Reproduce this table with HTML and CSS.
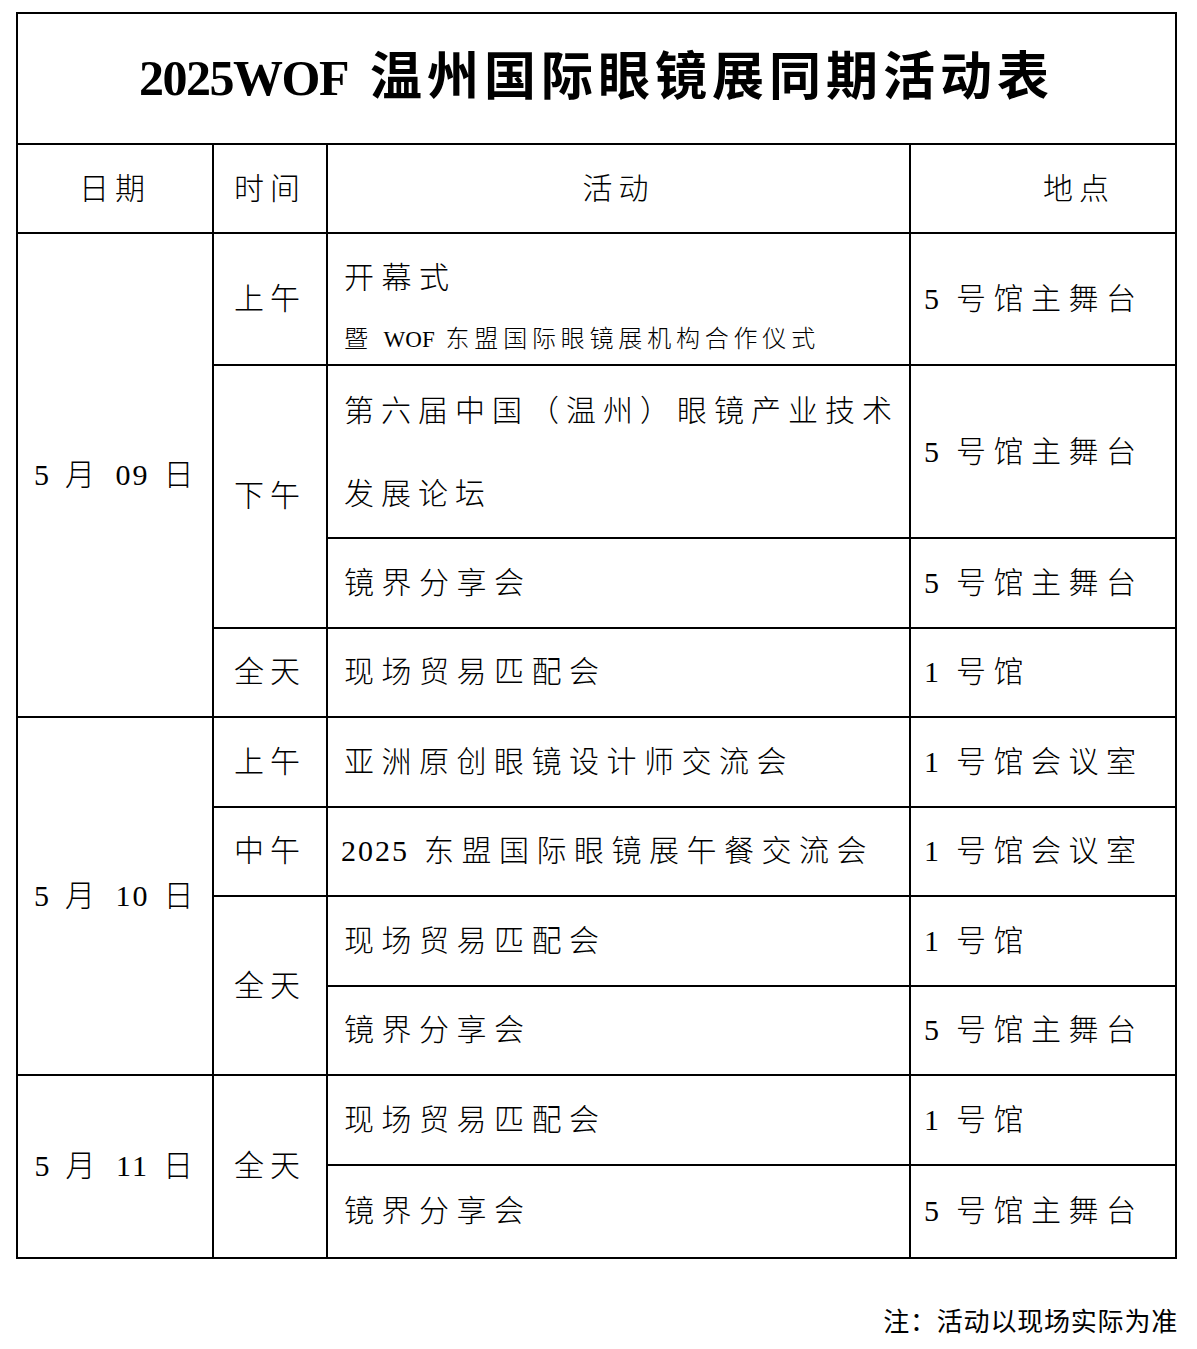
FILE: index.html
```html
<!DOCTYPE html>
<html lang="zh-CN">
<head>
<meta charset="utf-8">
<title>2025WOF 温州国际眼镜展同期活动表</title>
<link rel="stylesheet" href="styles.css">
</head>
<body>
<table class="sched">
  <colgroup>
    <col class="c-date"><col class="c-time"><col class="c-act"><col class="c-loc">
  </colgroup>
  <tr class="r-title"><td colspan="4" class="title"><span class="tn">2025WOF</span> 温州国际眼镜展同期活动表</td></tr>
  <tr class="r-head">
    <td class="head">日期</td>
    <td class="head">时间</td>
    <td class="head">活动</td>
    <td class="head head-loc">地点</td>
  </tr>
  <tr class="r-open">
    <td rowspan="4" class="date"><span class="n">5</span> 月 <span class="n">09</span> 日</td>
    <td class="time">上午</td>
    <td class="act act-open"><div class="open-main">开幕式</div><div class="open-sub">暨 <span class="w">WOF</span> 东盟国际眼镜展机构合作仪式</div></td>
    <td class="loc"><span class="n">5</span> 号馆主舞台</td>
  </tr>
  <tr class="r-forum">
    <td rowspan="2" class="time">下午</td>
    <td class="act act-forum">第六届中国（温州）眼镜产业技术<br>发展论坛</td>
    <td class="loc"><span class="n">5</span> 号馆主舞台</td>
  </tr>
  <tr class="r-std">
    <td class="act">镜界分享会</td>
    <td class="loc"><span class="n">5</span> 号馆主舞台</td>
  </tr>
  <tr class="r-std">
    <td class="time">全天</td>
    <td class="act">现场贸易匹配会</td>
    <td class="loc"><span class="n">1</span> 号馆</td>
  </tr>
  <tr class="r-std">
    <td rowspan="4" class="date"><span class="n">5</span> 月 <span class="n">10</span> 日</td>
    <td class="time">上午</td>
    <td class="act">亚洲原创眼镜设计师交流会</td>
    <td class="loc"><span class="n">1</span> 号馆会议室</td>
  </tr>
  <tr class="r-std">
    <td class="time">中午</td>
    <td class="act act-num"><span class="n">2025</span> 东盟国际眼镜展午餐交流会</td>
    <td class="loc"><span class="n">1</span> 号馆会议室</td>
  </tr>
  <tr class="r-std">
    <td rowspan="2" class="time">全天</td>
    <td class="act">现场贸易匹配会</td>
    <td class="loc"><span class="n">1</span> 号馆</td>
  </tr>
  <tr class="r-std">
    <td class="act">镜界分享会</td>
    <td class="loc"><span class="n">5</span> 号馆主舞台</td>
  </tr>
  <tr class="r-std">
    <td rowspan="2" class="date"><span class="n">5</span> 月 <span class="n">11</span> 日</td>
    <td rowspan="2" class="time">全天</td>
    <td class="act">现场贸易匹配会</td>
    <td class="loc"><span class="n">1</span> 号馆</td>
  </tr>
  <tr class="r-last">
    <td class="act">镜界分享会</td>
    <td class="loc"><span class="n">5</span> 号馆主舞台</td>
  </tr>
</table>
<p class="note">注：活动以现场实际为准</p>
</body>
</html>
```
FILE: styles.css
```css
html, body {
  margin: 0;
  padding: 0;
  background: #ffffff;
}
body {
  font-family: "Liberation Serif", "Noto Sans CJK SC", serif;
  color: #000000;
}
.sched {
  border-collapse: collapse;
  margin: 12px 0 0 16px;
  width: 1159px;
  table-layout: fixed;
}
.c-date { width: 196px; }
.c-time { width: 114px; }
.c-act { width: 583px; }
.c-loc { width: 266px; }
.sched td {
  border: 2px solid #000000;
  padding: 0;
  font-size: 30px;
  font-weight: 300;
  letter-spacing: 7.5px;
  vertical-align: middle;
  line-height: 1.2;
}
.r-title td { height: 129px; }
.r-head td { height: 87px; }
.r-open td { height: 130px; }
.r-forum td { height: 171px; }
.r-std td { height: 87.5px; }
.r-last td { height: 91px; }
.sched td.title {
  text-align: center;
  font-size: 52px;
  font-weight: 700;
  letter-spacing: 5px;
}
.tn {
  font-size: 50px;
  letter-spacing: -1.5px;
  margin-right: 4px;
}
.n {
  letter-spacing: 2px;
}
.w {
  letter-spacing: 0;
  font-size: 23px;
}
.sched td.head {
  text-align: center;
  letter-spacing: 6px;
}
.head-loc {
  padding-left: 72px !important;
}
.sched td.date {
  text-align: center;
  padding-left: 4px;
  letter-spacing: 6.5px;
}
.time {
  text-align: center;
}
.sched td.time {
  letter-spacing: 6px;
}
.act {
  padding-left: 16px !important;
  text-align: left;
}
.act-num {
  padding-left: 13px !important;
}
.loc {
  padding-left: 13px !important;
}
.act-open {
  vertical-align: top !important;
}
.open-main {
  margin-top: 26px;
  line-height: 36px;
}
.open-sub {
  margin-top: 28px;
  font-size: 24px;
  letter-spacing: 4.8px;
  line-height: 30px;
}
.sched td.act-forum {
  line-height: 83px;
  letter-spacing: 7px;
}
.note {
  margin: 43px 19px 0 0;
  text-align: right;
  font-family: "Noto Sans CJK SC", sans-serif;
  font-size: 26px;
  line-height: 36px;
  letter-spacing: 0.8px;
}
```
